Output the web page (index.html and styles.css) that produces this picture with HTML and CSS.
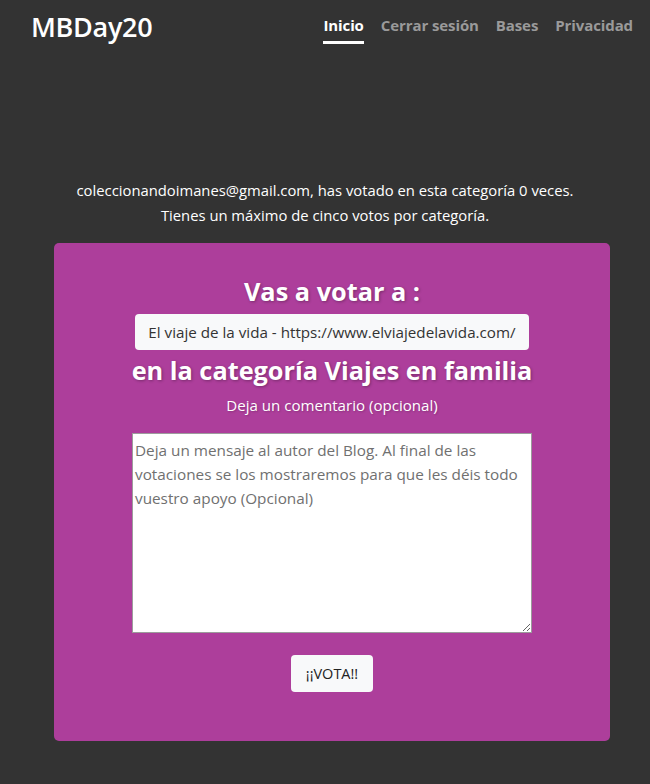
FILE: index.html
```html
<!DOCTYPE html>
<html lang="es">
<head>
    <meta charset="UTF-8">
    <meta name="viewport" content="width=device-width, initial-scale=1.0">
    <title>MBDay20</title>
    <link rel="stylesheet" href="styles.css">
</head>
<body>

<header class="topbar">
    <a class="brand" href="#">MBDay20</a>
    <nav class="nav">
        <a class="nav-link active" href="#">Inicio</a>
        <a class="nav-link" href="#">Cerrar sesión</a>
        <a class="nav-link" href="#">Bases</a>
        <a class="nav-link" href="#">Privacidad</a>
    </nav>
</header>

<main class="main">
    <p class="intro">coleccionandoimanes@gmail.com, has votado en esta categoría 0 veces.<br>Tienes un máximo de cinco votos por categoría.</p>

    <div class="card">
        <h2>Vas a votar a :</h2>
        <input class="blog" type="text" value="El viaje de la vida - https://www.elviajedelavida.com/" readonly>
        <h2>en la categoría Viajes en familia</h2>
        <label for="comment">Deja un comentario (opcional)</label>
        <textarea id="comment" placeholder="Deja un mensaje al autor del Blog. Al final de las votaciones se los mostraremos para que les déis todo vuestro apoyo (Opcional)"></textarea>
        <button type="submit">¡¡VOTA!!</button>
    </div>
</main>

</body>
</html>
```

FILE: styles.css
```css
* {
    box-sizing: border-box;
    margin: 0;
    padding: 0;
    font-family: "Open Sans", sans-serif;
}

body {
    background-color: #333333;
    color: #fff;
}

.topbar {
    display: flex;
    justify-content: space-between;
    align-items: flex-start;
    padding: 8px 17px 0 31px;
    height: 60px;
}

.brand {
    color: #fff;
    text-decoration: none;
    font-size: 27px;
    font-weight: 600;
    letter-spacing: -0.3px;
}

.nav {
    display: flex;
    gap: 17px;
    padding-top: 7px;
}

.nav-link {
    color: #9a9a9a;
    text-decoration: none;
    font-size: 15px;
    font-weight: 700;
    letter-spacing: -0.1px;
    padding-bottom: 6px;
    border-bottom: 3px solid transparent;
}

.nav-link.active {
    color: #fff;
    border-bottom-color: #fff;
}

.main {
    padding-top: 118px;
}

.intro {
    text-align: center;
    font-size: 14.8px;
    line-height: 25px;
    margin-bottom: 15px;
}

.card {
    width: 556px;
    margin-left: 54px;
    background-color: #ad3e9b;
    border-radius: 5px;
    padding: 31px 0 49px;
    display: flex;
    flex-direction: column;
    align-items: center;
}

.card h2 {
    font-size: 25.3px;
    font-weight: 700;
    line-height: 34px;
    text-shadow: 1px 1px 3px rgba(0, 0, 0, 0.3);
}

.blog {
    width: 394px;
    height: 36px;
    margin: 6px 0 3px;
    border: none;
    border-radius: 4px;
    background-color: #f8f9fa;
    color: #333;
    font-size: 15.2px;
    text-align: center;
}

label {
    font-size: 15.1px;
    margin: 8px 0 18px;
    text-shadow: 1px 1px 2px rgba(0, 0, 0, 0.2);
}

textarea {
    width: 400px;
    height: 200px;
    padding: 4px 2px;
    border: 1px solid #9c9c9c;
    background: #fff;
    font-size: 15.3px;
    line-height: 24px;
    color: #333;
}

textarea::placeholder {
    color: #707070;
}

button {
    margin-top: 22px;
    width: 82px;
    height: 37px;
    border: none;
    border-radius: 4px;
    background-color: #f8f9fa;
    color: #222;
    font-size: 14.5px;
    cursor: pointer;
}
```
